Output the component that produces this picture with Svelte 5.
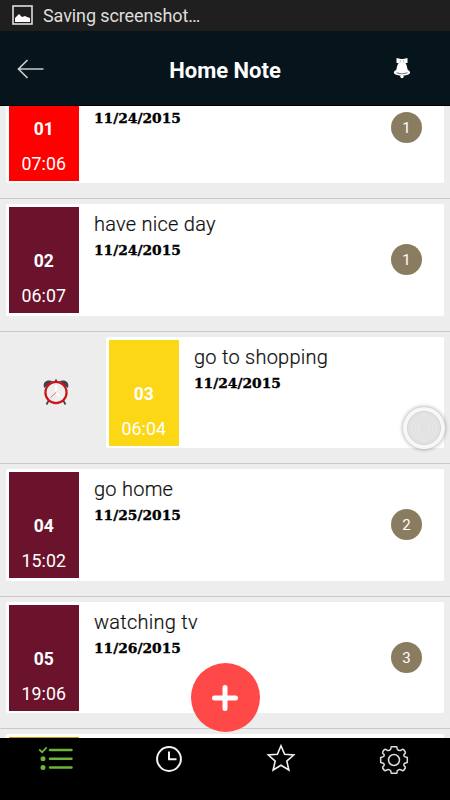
<script>
    let notes = [
        { number: "01", time: "07:06", title: "", date: "11/24/2015", count: 1, color: "#ff0000" },
        { number: "02", time: "06:07", title: "have nice day", date: "11/24/2015", count: 1, color: "#6b132c" },
        { number: "03", time: "06:04", title: "go to shopping", date: "11/24/2015", color: "#fcd716", swiped: true },
        { number: "04", time: "15:02", title: "go home", date: "11/25/2015", count: 2, color: "#6b132c" },
        { number: "05", time: "19:06", title: "watching tv", date: "11/26/2015", count: 3, color: "#6b132c" },
        { number: "", time: "", title: "", date: "", color: "#c39b0c" },
    ];
</script>

<div class="screen">
    <div class="status">
        <svg width="21" height="20" viewBox="0 0 21 20">
            <rect x="1" y="1" width="19" height="18" fill="none" stroke="#dedede" stroke-width="1.6" />
            <path d="M3 17V13L7 9L10 12L13 11L15 12L18 13V17Z" fill="#fff" />
        </svg>
        <span>Saving screenshot…</span>
    </div>

    <header>
        <svg class="back" width="28" height="22" viewBox="0 0 28 22">
            <path d="M26.5 11H2M10.5 2L1.5 11L10.5 20" fill="none" stroke="#c8cbcd" stroke-width="1.7" />
        </svg>
        <h1>Home Note</h1>
        <svg class="bell" width="18" height="22" viewBox="0 0 18 22">
            <path d="M3.5 1L8 2H10L14.5 1V6L12.5 6C14 8 14 11 14.8 13C18 14.5 18 17 14 18Q9 19.5 4 18C0 17 0 14.5 3.2 13C4 11 4 8 5.5 6H3.5Z" fill="#fff" />
            <path d="M3.5 15.8Q9 18 14.5 15.8" fill="none" stroke="#06141c" stroke-width=".6" />
            <path d="M7.3 3V5.5M10.7 3V5.5" stroke="#9aa8b8" stroke-width=".7" />
            <circle cx="9" cy="19.5" r="1.7" fill="#fff" />
        </svg>
    </header>

    <main>
        <ul>
            {#each notes as note}
                <li>
                    {#if note.swiped}
                        <div class="alarm">
                            <svg width="26" height="27" viewBox="0 0 26 27">
                                <path d="M6 21L3.5 25.5M20 21L22.5 25.5" stroke="#35474f" stroke-width="1.8" />
                                <path d="M1.2 9C-.8 4 3 0 9.5 2ZM24.8 9C26.8 4 23 0 16.5 2Z" fill="#35474f" />
                                <rect x="12" y=".5" width="2" height="3" fill="#35474f" />
                                <circle cx="13" cy="13.5" r="10.6" fill="#eeeeee" stroke="#ce1418" stroke-width="2.2" />
                                <path d="M13 6V13L16.5 17.5" fill="none" stroke="#fff" stroke-width="1.8" />
                                <path d="M13.5 13L7.5 18.5" stroke="#e87373" stroke-width="1" />
                            </svg>
                        </div>
                    {/if}
                    <div class="card">
                        <div class="label" style="background: {note.color}">
                            <b>{note.number}</b>
                            <span>{note.time}</span>
                        </div>
                        <div class="info">
                            <div class="title">{note.title}</div>
                            <div class="date">{note.date}</div>
                        </div>
                        {#if note.count}
                            <span class="count">{note.count}</span>
                        {/if}
                    </div>
                </li>
            {/each}
        </ul>
    </main>

    <nav>
        <svg width="36" height="26" viewBox="0 0 36 26">
            <g fill="none" stroke="#6bb536" stroke-width="2.5" stroke-linecap="round">
                <path d="M12 5H33.5M12 13.7H33.5M12 22.4H33.5" />
                <path d="M1.2 4.5L4.2 7.2L8.7 2.4" stroke-width="1.7" stroke-linecap="butt" />
            </g>
            <circle cx="5" cy="13.7" r="2.5" fill="#6bb536" />
            <circle cx="5" cy="22.4" r="2.5" fill="#6bb536" />
        </svg>
        <svg width="28" height="28" viewBox="0 0 28 28" fill="none" stroke="#f2f2f2" stroke-width="2">
            <circle cx="14" cy="14" r="11.9" />
            <path d="M14 6.5V14.3H21.5" />
        </svg>
        <svg class="star" width="30" height="30" viewBox="0 0 30 30" fill="none" stroke="#f0f0f0" stroke-width="1.6">
            <path d="M15 2.8L18.6 11.3L27.7 12L20.8 18.1L22.9 27L15 22.3L7.1 27L9.2 18.1L2.3 12L11.4 11.3Z" />
        </svg>
        <svg width="30" height="30" viewBox="0 0 30 30" fill="none" stroke="#dcdcdc" stroke-width="1.5" stroke-linejoin="round">
            <circle cx="15" cy="15" r="5.5" />
            <path d="M12.2 1.8H17.8L18.3 4.2Q20.3 6.6 22.5 4.8Q24.2 3.4 26 6.5Q27 8 25.2 9.2Q24 11.2 26.5 12L28.3 12.4V17.6L26.5 18Q24 18.8 25.2 20.8Q27 22 26 23.5Q24.2 26.6 22.5 25.2Q20.3 23.4 18.3 25.8L17.8 28.2H12.2L11.7 25.8Q9.7 23.4 7.5 25.2Q5.8 26.6 4 23.5Q3 22 4.8 20.8Q6 18.8 3.5 18L1.7 17.6V12.4L3.5 12Q6 11.2 4.8 9.2Q3 8 4 6.5Q5.8 3.4 7.5 4.8Q9.7 6.6 11.7 4.2Z" />
        </svg>
    </nav>

    <div class="add">
        <svg width="28" height="28" viewBox="0 0 28 28">
            <path d="M14 3.5V24.5M3.5 14H24.5" stroke="#fff" stroke-width="5" stroke-linecap="round" />
        </svg>
    </div>

    <div class="touch">
        <svg width="34" height="34" viewBox="0 0 34 34" fill="none" stroke="#e9e9e9" stroke-width="1">
            <circle cx="17" cy="17" r="16.5" fill="#e2e2e2" stroke="#d3d3d3" />
            <circle cx="17" cy="17" r="12.5" />
            <circle cx="17" cy="17" r="9" />
            <circle cx="17" cy="17" r="5.5" />
        </svg>
    </div>
</div>

<style>
    :global(body) {
        margin: 0;
    }

    .screen {
        position: relative;
        display: flex;
        flex-direction: column;
        width: 450px;
        height: 800px;
        overflow: hidden;
        background: #ededed;
        font-family: Roboto, sans-serif;
    }

    .status {
        display: flex;
        align-items: center;
        gap: 10px;
        height: 31px;
        padding: 0 0 1px 12px;
        box-sizing: border-box;
        background: #1f1f1f;
        color: #dedede;
        font-size: 18px;
        letter-spacing: -0.1px;
    }

    header {
        display: flex;
        align-items: center;
        justify-content: space-between;
        height: 75px;
        padding: 2px 39px 0 17px;
        box-sizing: border-box;
        background: #06141c;
        border-bottom: 1px solid #000;
    }

    h1 {
        margin: 2px 0 0 12px;
        color: #fff;
        font-size: 22px;
        font-weight: 700;
    }

    .bell {
        margin-bottom: 2px;
    }

    main {
        flex: 1;
        min-height: 0;
        overflow: hidden;
    }

    ul {
        margin: -40.4px 0 0;
        padding: 0;
        list-style: none;
    }

    li {
        display: flex;
        height: 132.5px;
        padding: 5px 6px 0;
        box-sizing: border-box;
        border-top: 1px solid #c9c9c9;
    }

    .alarm {
        display: flex;
        align-items: center;
        justify-content: center;
        width: 100px;
        height: 111.5px;
    }

    .card {
        display: flex;
        flex: 1;
        height: 111.5px;
        padding: 3px;
        box-sizing: border-box;
        background: #fff;
        border-radius: 2px;
    }

    .label {
        display: flex;
        flex-direction: column;
        align-items: center;
        justify-content: flex-end;
        width: 69.5px;
        height: 106px;
        padding-bottom: 6px;
        box-sizing: border-box;
        color: #fff;
        font-size: 17.8px;
        line-height: 22px;
    }

    .label b {
        margin-bottom: 13px;
        font-size: 17.5px;
    }

    .info {
        flex: 1;
        padding-left: 15.5px;
        color: #111;
        white-space: nowrap;
    }

    .title {
        height: 32px;
        font-size: 20px;
        font-weight: 300;
        line-height: 34px;
        letter-spacing: 0.25px;
        -webkit-text-stroke: 0.2px #111;
    }

    .date {
        color: #000;
        font-family: "DejaVu Serif", serif;
        font-size: 13.8px;
        font-weight: 700;
        line-height: 22px;
        -webkit-text-stroke: 0.35px #000;
    }

    .count {
        align-self: center;
        width: 31px;
        height: 31px;
        margin-right: 19px;
        border-radius: 50%;
        background: #8a7c61;
        color: #fff;
        font-size: 15px;
        line-height: 32px;
        text-align: center;
    }

    nav {
        display: grid;
        grid-template-columns: repeat(4, 1fr);
        justify-items: center;
        height: 62px;
        padding-top: 7px;
        box-sizing: border-box;
        background: #000;
    }

    .star {
        margin-top: -2px;
    }

    .add {
        position: absolute;
        left: 190.5px;
        top: 663px;
        display: flex;
        align-items: center;
        justify-content: center;
        width: 69px;
        height: 69px;
        border-radius: 50%;
        background: #ff4848;
    }

    .touch {
        position: absolute;
        left: 403px;
        top: 407px;
        display: flex;
        align-items: center;
        justify-content: center;
        width: 42px;
        height: 42px;
        border-radius: 50%;
        background: #f7f7f7;
        box-shadow: 0 0 4px rgba(0, 0, 0, 0.4);
    }
</style>
